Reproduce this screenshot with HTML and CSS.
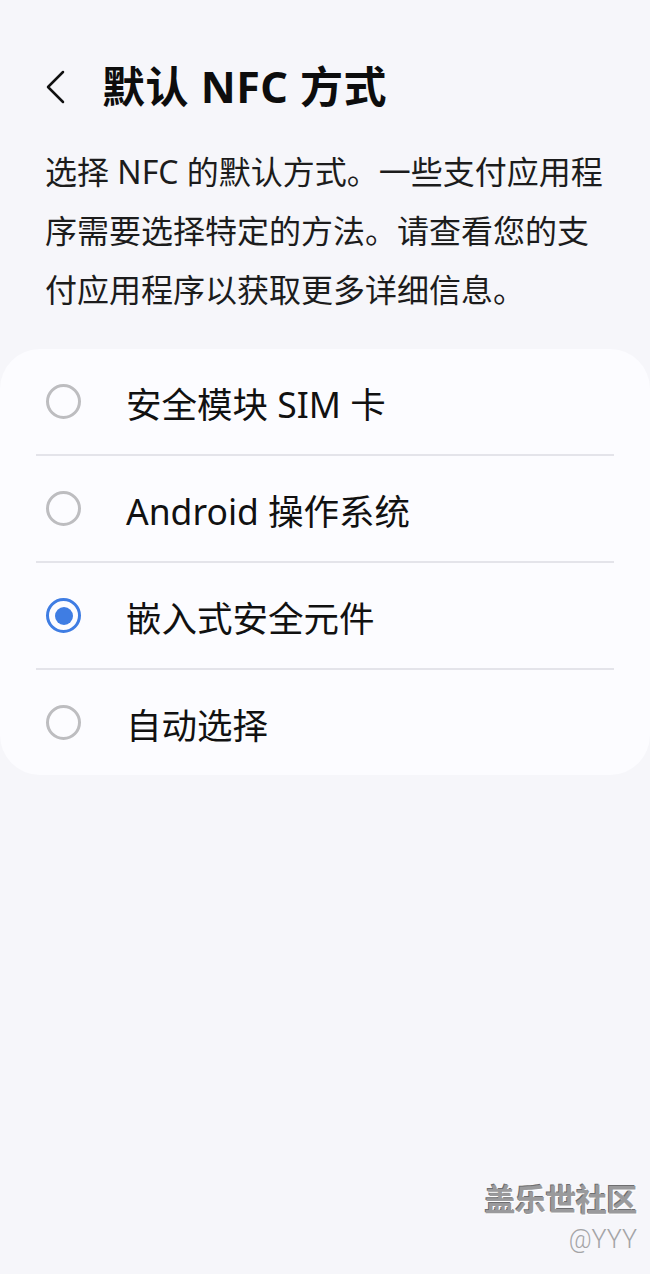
FILE: index.html
```html
<!DOCTYPE html>
<html lang="zh-CN">
<head>
<meta charset="utf-8">
<title>默认 NFC 方式</title>
<link rel="stylesheet" href="styles.css">
</head>
<body>
<div class="page">
  <header class="header">
    <svg class="back" width="24" height="34" viewBox="0 0 24 34"><path d="M19 2 L4 17 L19 32" fill="none" stroke="#111" stroke-width="2.5" stroke-linecap="round" stroke-linejoin="round"/></svg>
    <h1 class="title">默认 NFC 方式</h1>
  </header>
  <p class="desc">选择 NFC 的默认方式。一些支付应用程<br>序需要选择特定的方法。请查看您的支<br>付应用程序以获取更多详细信息。</p>
  <div class="card">
    <div class="row"><span class="radio"></span><span class="label">安全模块 SIM 卡</span></div>
    <div class="row"><span class="radio"></span><span class="label">Android 操作系统</span></div>
    <div class="row"><span class="radio checked"></span><span class="label">嵌入式安全元件</span></div>
    <div class="row"><span class="radio"></span><span class="label">自动选择</span></div>
  </div>
  <div class="watermark">
    <div class="wm-main">盖乐世社区</div>
    <div class="wm-sub">@YYY</div>
  </div>
</div>
</body>
</html>
```
FILE: styles.css
```css
html, body {
  margin: 0;
  padding: 0;
  background: #f6f6fa;
}
body {
  font-family: "Noto Sans", "Noto Sans CJK SC", sans-serif;
  color: #111;
}
.page {
  position: relative;
  min-height: 1274px;
}
.header {
  display: flex;
  align-items: center;
  height: 60px;
  padding: 57px 0 0 44px;
}
.back {
  display: block;
  flex: none;
}
.title {
  margin: 0 0 0 34px;
  font-size: 43px;
  font-weight: 700;
  line-height: 60px;
  letter-spacing: 0.5px;
  color: #0d0d0d;
}
.desc {
  margin: 25px 0 0 0;
  padding: 0 45px;
  font-size: 32px;
  line-height: 59px;
  color: #1c1c1c;
  white-space: nowrap;
}
.card {
  margin-top: 30px;
  background: #fcfcff;
  border-radius: 40px;
  padding: 0 36px;
}
.row {
  display: flex;
  align-items: center;
  height: 105px;
  border-bottom: 2px solid #e4e4ea;
}
.row:last-child {
  border-bottom: none;
}
.radio {
  flex: none;
  box-sizing: border-box;
  width: 35px;
  height: 35px;
  margin-left: 10px;
  border-radius: 50%;
  border: 3px solid #bdbdc0;
  display: flex;
  align-items: center;
  justify-content: center;
}
.radio.checked {
  border: 3.5px solid #3f7de3;
}
.radio.checked::after {
  content: "";
  width: 18px;
  height: 18px;
  border-radius: 50%;
  background: #3f7de3;
}
.label {
  margin-left: 45px;
  padding-top: 4px;
  font-size: 35.5px;
  line-height: 44px;
  color: #111;
}
.watermark {
  position: absolute;
  right: 13px;
  top: 1176px;
  text-align: right;
}
.wm-main {
  font-family: "Noto Sans CJK SC", sans-serif;
  font-size: 31px;
  line-height: 44px;
  font-weight: 700;
  color: #9a9a9c;
  text-shadow: 1px 1px 0 #ffffff, -1px -1px 0 #6e6e70;
  letter-spacing: -0.5px;
}
.wm-sub {
  font-family: "Roboto", "Noto Sans", sans-serif;
  font-size: 25px;
  line-height: 36px;
  margin-top: 2px;
  color: #a4a4a6;
  font-weight: 300;
}
```
